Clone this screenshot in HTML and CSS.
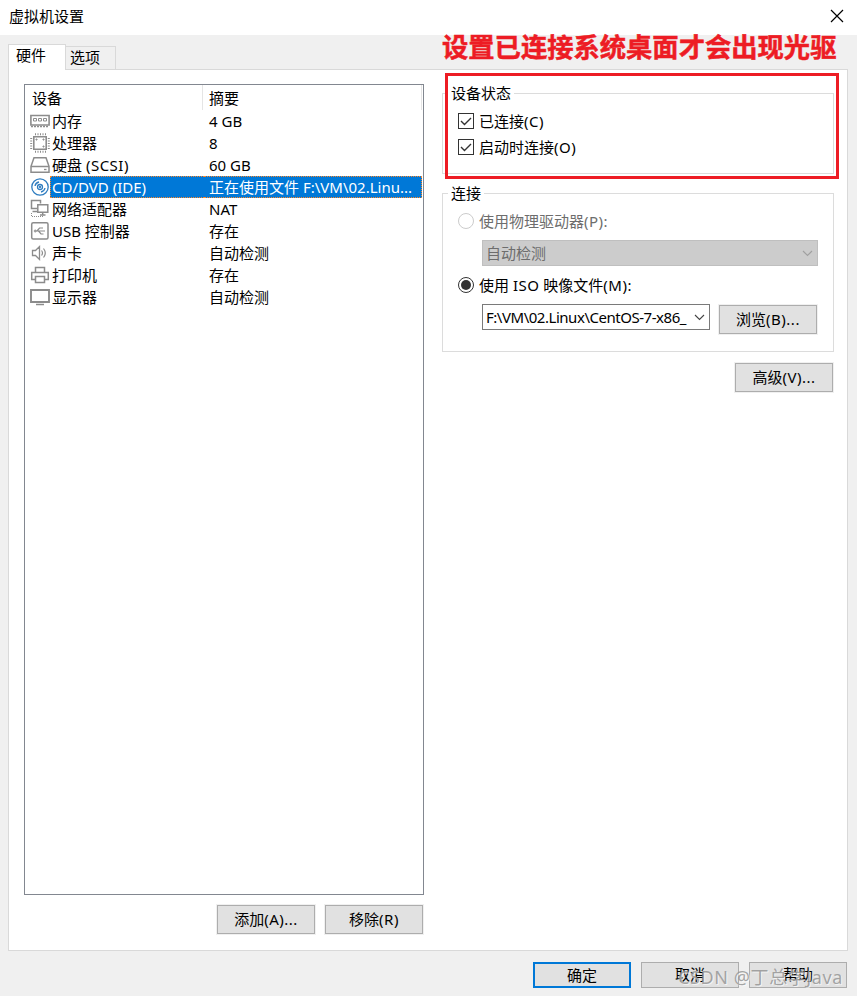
FILE: index.html
```
<!DOCTYPE html>
<html lang="zh-CN">

<head>
    <meta charset="UTF-8">
    <meta name="viewport" content="width=device-width, initial-scale=1.0">
    <title>虚拟机设置</title>
    <link rel="stylesheet" href="styles.css">
</head>

<body>
    <div class="titlebar">
        <span>虚拟机设置</span>
        <svg class="close" width="14" height="14" viewBox="0 0 14 14"><path d="M1 1l12 12M13 1L1 13" /></svg>
    </div>

    <div class="tabs">
        <div class="tab active">硬件</div>
        <div class="tab">选项</div>
    </div>

    <div class="panel">
        <div class="left">
            <div class="device-list">
                <div class="row header">
                    <span class="name">设备</span>
                    <span class="summary">摘要</span>
                </div>
                <div class="row">
                    <svg class="icon" viewBox="0 0 22 22"><path d="M1.9 5.5h18.200v9.500H1.900z" stroke-width="1.600" /><path d="M4.500 8.500h3v2.500h-3zM9.500 8.500h3v2.500h-3zM14.500 8.500h3v2.500h-3z" /><path d="M2 16.500h18" stroke-width="1.500" stroke-dasharray="2 1" /></svg>
                    <span class="name">内存</span>
                    <span class="summary">4 GB</span>
                </div>
                <div class="row">
                    <svg class="icon" viewBox="0 0 22 22"><path d="M4.800 4.800h12.400v12.400H4.800z" stroke-width="1.600" /><path d="M6 2.200h11M6 19.800h11M2.200 6v11M19.800 6v11" stroke-width="2" stroke-dasharray="1 1.500" /><path d="M7 7h1v1H7zM14 7h1v1h-1zM14 14h1v1h-1z" /></svg>
                    <span class="name">处理器</span>
                    <span class="summary">8</span>
                </div>
                <div class="row">
                    <svg class="icon" viewBox="0 0 22 22"><path d="M5 3.800h12l3 8.500v5.900H2v-5.900zM2 12.500h18" stroke-width="1.500" /><path d="M15 15.500h2.500" stroke-width="1.300" /></svg>
                    <span class="name">硬盘 <i>(SCSI)</i></span>
                    <span class="summary">60 GB</span>
                </div>
                <div class="row selected">
                    <svg class="icon disc" viewBox="0 0 22 22"><circle cx="11" cy="11" r="8.200" /><circle cx="11" cy="11" r="2.500" /><circle cx="11" cy="11" r=".5" /><path d="M6 10a5 5 0 0 1 4-4M12 16a5 5 0 0 0 4-4" /></svg>
                    <span class="name">CD/DVD (IDE)</span>
                    <span class="summary">正在使用文件 F:\VM\02.Linu...</span>
                </div>
                <div class="row">
                    <svg class="icon" viewBox="0 0 22 22"><path d="M8 10.500H2.500v-8h9v3M3.500 13.500H8" stroke-width="1.500" /><path d="M8.800 6.800h10v7.400h-10zM11 17h5.500M13.700 14v3" stroke-width="1.500" /><path d="M2.500 15v4M3 18.500h11" stroke-dasharray="1 1" /></svg>
                    <span class="name">网络适配器</span>
                    <span class="summary">NAT</span>
                </div>
                <div class="row">
                    <svg class="icon" viewBox="0 0 22 22"><rect x="2.700" y="2.700" width="16.300" height="16.300" rx="1.500" stroke-width="1.500" /><path d="M6 11h10M8 11l2.500-3H14M9.500 11l2.500 3h2.500" stroke-width="1.200" /><circle cx="6.200" cy="11" r="1" /></svg>
                    <span class="name">USB 控制器</span>
                    <span class="summary">存在</span>
                </div>
                <div class="row">
                    <svg class="icon" viewBox="0 0 22 22"><path d="M3.500 8.500h3l4-4v13l-4-4h-3z" stroke-width="1.300" /><path d="M12.500 8.500q2 2.500 0 5M14.500 6.500q3.500 4.500 0 9" stroke-width="1.200" /></svg>
                    <span class="name">声卡</span>
                    <span class="summary">自动检测</span>
                </div>
                <div class="row">
                    <svg class="icon" viewBox="0 0 22 22"><path d="M6.500 8.500v-5h9v5M6.500 15.500H2.700v-7h16.600v7h-3.800M6.500 12.500h9v6h-9z" stroke-width="1.500" /></svg>
                    <span class="name">打印机</span>
                    <span class="summary">存在</span>
                </div>
                <div class="row">
                    <svg class="icon" viewBox="0 0 22 22"><path d="M2 4h18v12H2z" stroke-width="1.900" /><path d="M7 18.500h8" stroke-width="1.500" /></svg>
                    <span class="name">显示器</span>
                    <span class="summary">自动检测</span>
                </div>
            </div>
            <div class="list-buttons">
                <button>添加<i>(A)...</i></button>
                <button>移除<i>(R)</i></button>
            </div>
        </div>

        <div class="right">
            <fieldset class="status">
                <legend>设备状态</legend>
                <div class="option"><span class="check"><svg viewBox="0 0 14 14"><path d="M2 7l3.500 3.500L12 4" /></svg></span>已连接<i>(C)</i></div>
                <div class="option"><span class="check"><svg viewBox="0 0 14 14"><path d="M2 7l3.500 3.500L12 4" /></svg></span>启动时连接<i>(O)</i></div>
            </fieldset>
            <fieldset class="connection">
                <legend>连接</legend>
                <div class="option disabled"><span class="radio"></span>使用物理驱动器<i>(P):</i></div>
                <div class="select disabled">
                    <span>自动检测</span>
                    <svg class="arrow" viewBox="0 0 11 7"><path d="M1 1l4.500 4.500L10 1" /></svg>
                </div>
                <div class="option"><span class="radio checked"></span>使用 <i>ISO</i> 映像文件<i>(M):</i></div>
                <div class="file-row">
                    <div class="select">
                        <span class="path">F:\VM\02.Linux\CentOS-7-x86_</span>
                        <svg class="arrow" viewBox="0 0 11 7"><path d="M1 1l4.500 4.500L10 1" /></svg>
                    </div>
                    <button>浏览<i>(B)...</i></button>
                </div>
            </fieldset>
            <button class="advanced">高级<i>(V)...</i></button>
        </div>
    </div>

    <div class="footer">
        <button class="default">确定</button>
        <button>取消</button>
        <button>帮助</button>
    </div>

    <div class="note">设置已连接系统桌面才会出现光驱</div>
    <div class="note-box"></div>
    <div class="watermark">CSDN @丁总学Java</div>
</body>

</html>
```

FILE: styles.css
```
* {
    box-sizing: border-box;
}

body {
    position: relative;
    margin: 0;
    width: 857px;
    height: 996px;
    overflow: hidden;
    background-color: #f0f0f0;
    color: #000;
    font-family: "Noto Sans", "Noto Sans CJK SC", sans-serif;
    font-size: 15px;
    line-height: 22px;
    white-space: nowrap;
}

i {
    font-style: normal;
    letter-spacing: 0.5px;
}

.titlebar {
    display: flex;
    justify-content: space-between;
    height: 35px;
    padding: 5px 13px 0 9px;
    background-color: #fff;
}

.close {
    margin-top: 4px;
    fill: none;
    stroke: #000;
    stroke-width: 1.2;
}

.tabs {
    display: flex;
    align-items: flex-end;
    height: 34px;
    padding-left: 8px;
}

.tab {
    width: 50px;
    height: 23px;
    padding-left: 4px;
    border: 1px solid #d9d9d9;
    border-width: 1px 1px 0 0;
    line-height: 21px;
}

.tab.active {
    z-index: 1;
    width: 58px;
    height: 26px;
    margin-bottom: -1px;
    padding-left: 7px;
    border-left-width: 1px;
    background-color: #fff;
}

.panel {
    display: flex;
    width: 840px;
    height: 882px;
    margin-left: 8px;
    padding: 14px 13px 0 15px;
    border: 1px solid #d9d9d9;
    background-color: #fff;
}

.left {
    width: 400px;
}

.device-list {
    height: 811px;
    padding: 0 1px;
    border: 1px solid #828790;
}

.row {
    display: flex;
    height: 22px;
    padding-left: 3px;
}

.icon {
    width: 22px;
    height: 22px;
    margin-right: -1px;
    fill: none;
    stroke: #8c8c8c;
    stroke-width: 1;
}

.icon.disc {
    stroke: #2f7dc0;
    stroke-width: 1.3;
}

.row .name {
    width: 154px;
    padding-left: 2px;
}

.row .summary {
    flex: 1;
    padding-left: 5px;
}

.row.header {
    height: 25px;
    padding-left: 4px;
    line-height: 26px;
}

.header .name {
    width: 173px;
    border-right: 1px solid #e5e5e5;
}

.header .summary {
    padding-left: 6px;
    border-right: 1px solid #e5e5e5;
}

.selected .name,
.selected .summary {
    border: 1px dotted #ff8728;
    background-color: #0078d7;
    color: #fff;
    line-height: 20px;
}

.selected .name {
    padding-left: 1px;
    border-right: none;
}

.selected .summary {
    border-left: none;
}

.list-buttons {
    display: flex;
    justify-content: flex-end;
    gap: 10px;
    padding: 10px 1px 0 0;
}

button {
    width: 98px;
    height: 29px;
    padding: 0 0 2px;
    border: 1px solid #adadad;
    background-color: #e1e1e1;
    box-shadow: 0 0 0 1px #f0f0f0;
    color: #000;
    font: inherit;
}

.right {
    display: flex;
    flex-direction: column;
    width: 392px;
    margin: -1px 0 0 18px;
}

fieldset {
    margin: 0;
    padding: 5px 15px 0;
    border: 1px solid #dcdcdc;
}

legend {
    margin-left: -10px;
    padding: 0 3px;
    line-height: 20px;
}

.status {
    height: 91px;
}

.connection {
    height: 169px;
    margin-top: 9px;
}

.option {
    display: flex;
    align-items: center;
    height: 26px;
    white-space: pre;
}

.check,
.radio {
    width: 16px;
    height: 16px;
    margin-right: 5px;
    border: 1px solid #333;
}

.check svg {
    display: block;
    fill: none;
    stroke: #333;
    stroke-width: 1.4;
}

.radio {
    border-radius: 50%;
}

.radio.checked {
    padding: 2px;
    background-color: #333;
    background-clip: content-box;
}

.disabled {
    color: #6d6d6d;
}

.disabled .radio {
    border-color: #ccc;
}

.select {
    display: flex;
    align-items: center;
    justify-content: space-between;
    width: 228px;
    height: 26px;
    padding: 0 4px 0 3px;
    border: 1px solid #7a7a7a;
}

.select.disabled {
    width: 336px;
    margin: 6px 0 6px 24px;
    border-color: #bfbfbf;
    background-color: #ccc;
}

.path {
    letter-spacing: -0.47px;
}

.arrow {
    flex-shrink: 0;
    width: 11px;
    height: 7px;
    fill: none;
    stroke: #444;
    stroke-width: 1.1;
}

.disabled .arrow {
    stroke: #a0a0a0;
}

.file-row {
    display: flex;
    gap: 9px;
    margin: 6px 0 0 24px;
}

.file-row button {
    margin-top: 1px;
}

.advanced {
    align-self: flex-end;
    margin: 11px 1px 0 0;
}

.footer {
    display: flex;
    justify-content: flex-end;
    gap: 10px;
    padding: 11px 10px 0 0;
}

.footer button {
    height: 26px;
}

.footer .default {
    border: 2px solid #0078d7;
}

/* annotations lying over the dialog */
.note {
    position: absolute;
    top: 29px;
    left: 442px;
    color: #ed1c24;
    font-size: 26.3px;
    font-weight: bold;
    line-height: 36px;
    -webkit-text-stroke: 0.5px #ed1c24;
}

.note-box {
    position: absolute;
    top: 73px;
    left: 445px;
    width: 394px;
    height: 106px;
    border: 3px solid #ed1c24;
}

.watermark {
    position: absolute;
    top: 966px;
    left: 678px;
    color: rgba(150, 150, 150, 0.85);
    font-size: 18px;
    letter-spacing: 0.6px;
    text-shadow: 1px 1px 0 rgba(255, 255, 255, 0.6);
}
```
